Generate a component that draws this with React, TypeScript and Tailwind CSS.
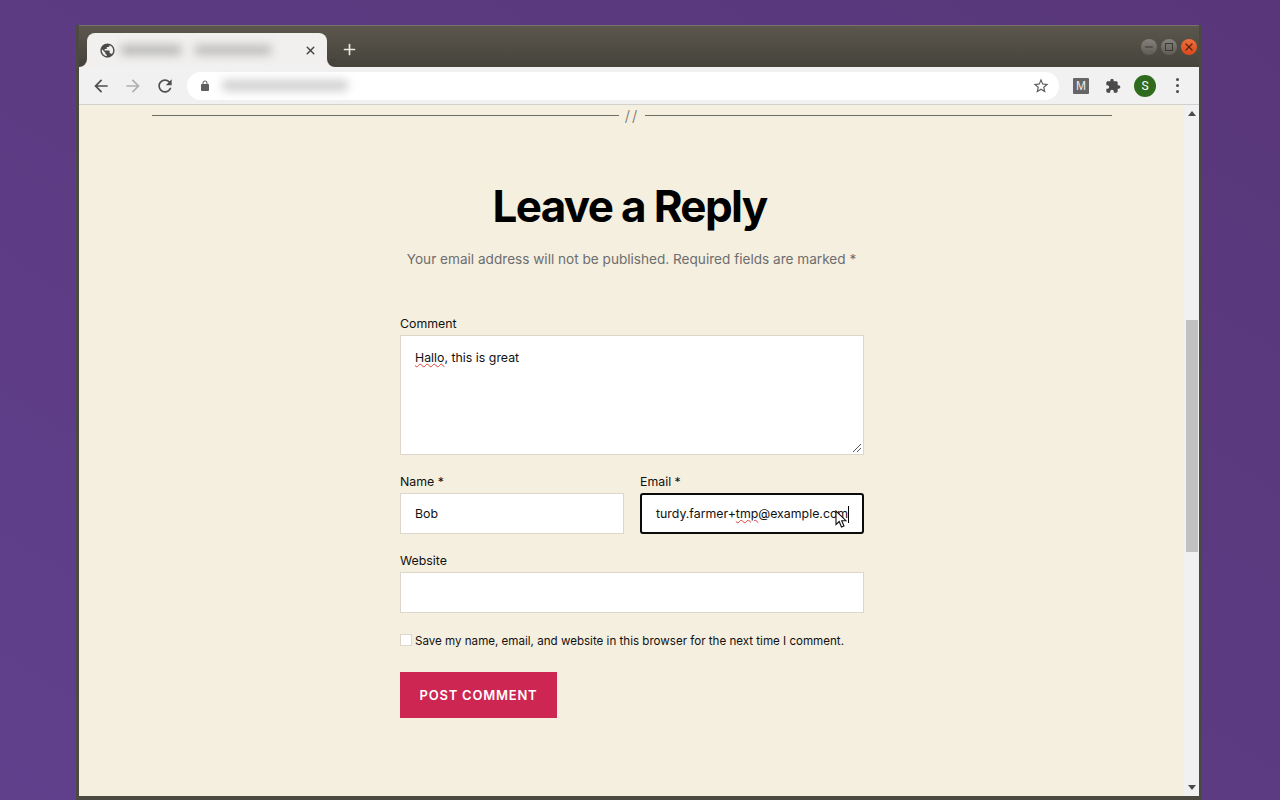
import { Minus, Plus, X } from 'lucide-react';

const inter = "font-['Inter',sans-serif]";

const Glyph = ({ d, className }: { d: string; className: string }) => (
  <svg viewBox="0 0 24 24" className={className} fill="currentColor">
    <path d={d} />
  </svg>
);

const icons = {
  globe: 'M12 2C6.48 2 2 6.48 2 12s4.48 10 10 10 10-4.48 10-10S17.52 2 12 2zm-1 17.93c-3.95-.49-7-3.85-7-7.93 0-.62.08-1.21.21-1.79L9 15v1c0 1.1.9 2 2 2v1.93zm6.9-2.54c-.26-.81-1-1.39-1.9-1.39h-1v-3c0-.55-.45-1-1-1H8v-2h2c.55 0 1-.45 1-1V7h2c1.1 0 2-.9 2-2v-.41c2.93 1.19 5 4.06 5 7.41 0 2.08-.8 3.97-2.1 5.39z',
  back: 'M20 11H7.83l5.59-5.59L12 4l-8 8 8 8 1.41-1.41L7.83 13H20v-2z',
  forward: 'M4 11h12.17l-5.59-5.59L12 4l8 8-8 8-1.41-1.41L16.17 13H4v-2z',
  reload: 'M17.65 6.35C16.2 4.9 14.21 4 12 4c-4.42 0-7.99 3.58-7.99 8s3.57 8 7.99 8c3.73 0 6.84-2.55 7.73-6h-2.08c-.82 2.33-3.04 4-5.65 4-3.31 0-6-2.69-6-6s2.69-6 6-6c1.66 0 3.14.69 4.22 1.78L13 11h7V4l-2.35 2.35z',
  lock: 'M18 8h-1V6c0-2.76-2.24-5-5-5S7 3.24 7 6v2H6c-1.1 0-2 .9-2 2v10c0 1.1.9 2 2 2h12c1.1 0 2-.9 2-2V10c0-1.1-.9-2-2-2zM9 6c0-1.66 1.34-3 3-3s3 1.34 3 3v2H9V6z',
  star: 'M22 9.24l-7.19-.62L12 2 9.19 8.63 2 9.24l5.46 4.73L5.82 21 12 17.27 18.18 21l-1.63-7.03L22 9.24zM12 15.4l-3.76 2.27 1-4.28-3.32-2.88 4.38-.38L12 6.1l1.71 4.04 4.38.38-3.32 2.88 1 4.28L12 15.4z',
  puzzle: 'M20.5 11H19V7c0-1.1-.9-2-2-2h-4V3.5C13 2.12 11.88 1 10.5 1S8 2.12 8 3.5V5H4c-1.1 0-1.99.9-1.99 2v3.8H3.5c1.49 0 2.7 1.21 2.7 2.7s-1.21 2.7-2.7 2.7H2V20c0 1.1.9 2 2 2h3.8v-1.5c0-1.49 1.21-2.7 2.7-2.7 1.49 0 2.7 1.21 2.7 2.7V22H17c1.1 0 2-.9 2-2v-4h1.5c1.38 0 2.5-1.12 2.5-2.5S21.88 11 20.5 11z',
};

const TitleBar = () => (
  <div className="relative flex h-[42px] items-end border-t border-[#77736a] bg-gradient-to-b from-[#5c574d] to-[#45433b] pl-[8px] pr-[9px]">
    <div className="relative flex h-[34px] w-[240px] items-center rounded-t-lg bg-[#f1f0ef] pl-[12px] pr-[10px]">
      <div className="absolute -left-2 bottom-0 h-2 w-2 bg-[#f1f0ef]">
        <div className="h-full w-full rounded-br-lg bg-[#45433b]" />
      </div>
      <div className="absolute -right-2 bottom-0 h-2 w-2 bg-[#f1f0ef]">
        <div className="h-full w-full rounded-bl-lg bg-[#45433b]" />
      </div>
      <Glyph d={icons.globe} className="h-[17px] w-[17px] text-[#4a4a4a]" />
      <div className="ml-[5px] flex flex-1 gap-[14px] blur-[5px]">
        <div className="h-[10px] w-[60px] bg-[#b8b7b5]" />
        <div className="h-[10px] w-[76px] bg-[#bdbcba]" />
      </div>
      <X className="h-[13px] w-[13px] text-[#45433f]" strokeWidth={2.6} />
    </div>
    <Plus className="mb-[9px] ml-[14px] h-[17px] w-[17px] text-[#ece9e2]" strokeWidth={2.4} />
    <div className="absolute right-[2px] top-[13px] flex gap-1">
      <div className="flex h-4 w-4 items-center justify-center rounded-full bg-gradient-to-b from-[#85827b] to-[#5f5c55]">
        <Minus className="h-3 w-3 text-[#3c3a35]" />
      </div>
      <div className="flex h-4 w-4 items-center justify-center rounded-full bg-gradient-to-b from-[#85827b] to-[#5f5c55]">
        <div className="h-2 w-2 border border-[#3c3a35]" />
      </div>
      <div className="flex h-4 w-4 items-center justify-center rounded-full bg-gradient-to-b from-[#f0703a] to-[#d8481c]">
        <X className="h-3 w-3 text-[#5a2410]" strokeWidth={2.4} />
      </div>
    </div>
  </div>
);

const Toolbar = () => (
  <div className="flex h-[38px] items-center border-b border-[#d3d1cd] bg-[#f1f1f1] pl-[12px]">
    <Glyph d={icons.back} className="h-[20px] w-[20px] text-[#4f4f4f]" />
    <Glyph d={icons.forward} className="ml-[12px] h-[20px] w-[20px] text-[#b0b0b0]" />
    <Glyph d={icons.reload} className="ml-[12px] h-[20px] w-[20px] text-[#4f4f4f]" />
    <div className="ml-[12px] flex h-[28px] w-[872px] items-center rounded-full bg-white pl-[12px] pr-[9px]">
      <Glyph d={icons.lock} className="h-[12px] w-[12px] text-[#5f5f5f]" />
      <div className="ml-[11px] flex-1">
        <div className="h-[11px] w-[126px] rounded bg-[#cfcfcf] blur-[5px]" />
      </div>
      <Glyph d={icons.star} className="h-[18px] w-[18px] text-[#5f5f5f]" />
    </div>
    <div className="ml-[14px] flex h-4 w-4 items-center justify-center rounded-[1px] bg-[#666] font-['Liberation_Sans',sans-serif] text-[12px] text-[#eee]">M</div>
    <Glyph d={icons.puzzle} className="ml-[16px] h-[16px] w-[16px] text-[#4a4a4a]" />
    <div className="ml-[13px] flex h-[22px] w-[22px] items-center justify-center rounded-full bg-[#2f6b1c] font-['Roboto',sans-serif] text-[12px] text-white">S</div>
    <div className="ml-[20px] flex flex-col gap-[3px]">
      <div className="h-[3px] w-[3px] rounded-full bg-[#4a4a4a]" />
      <div className="h-[3px] w-[3px] rounded-full bg-[#4a4a4a]" />
      <div className="h-[3px] w-[3px] rounded-full bg-[#4a4a4a]" />
    </div>
  </div>
);

const Scrollbar = () => (
  <div className="flex w-[15px] flex-col items-center bg-[#f1f1f1]">
    <div className="mt-[6px] h-0 w-0 border-x-[4px] border-b-[5px] border-x-transparent border-b-[#4a4a4a]" />
    <div className="mt-[204px] h-[232px] w-[12px] bg-[#c1c1c1]" />
    <div className="mt-auto mb-[6px] h-0 w-0 border-x-[4px] border-t-[5px] border-x-transparent border-t-[#4a4a4a]" />
  </div>
);

const Squiggle = ({ children }: { children: string }) => (
  <span className="underline decoration-[#e0403a] decoration-wavy decoration-[1px] underline-offset-1">{children}</span>
);

const Form = () => (
  <div className={`flex-1 overflow-hidden bg-[#f5efe0] ${inter}`}>
    <div className="flex items-center pl-[73px] pt-[2px]">
      <div className="h-px w-[467px] bg-[#6d6d68]" />
      <div className="flex h-[16px] w-[26px] items-center justify-center text-[15px] font-light leading-none tracking-[2px] text-[#6d6d68]">//</div>
      <div className="h-px w-[467px] bg-[#6d6d68]" />
    </div>
    <h1 className="mr-[4px] mt-[55px] text-center text-[44px] font-[750] leading-[56px] tracking-[-0.038em] text-black">Leave a Reply</h1>
    <p className="mt-[13px] text-center text-[13.6px] leading-[24px] text-[#6d6d6d]">
      Your email address will not be published. Required fields are marked *
    </p>
    <div className="ml-[321px] mt-[42px] w-[464px] text-[12.35px] text-[#111]">
      <label className="block leading-[22px]">Comment</label>
      <div className="relative h-[120px] border border-[#dcd7ca] bg-white px-[14px] pt-[12px] leading-[20px]">
        <Squiggle>Hallo</Squiggle>, this is great
        <svg viewBox="0 0 10 10" className="absolute bottom-[1px] right-[1px] h-[10px] w-[10px] text-[#555]" fill="none" stroke="currentColor">
          <path d="M1 9 9 1M5 9 9 5" />
        </svg>
      </div>
      <div className="mt-[16px] flex gap-4">
        <div className="w-[224px]">
          <label className="block leading-[22px]">Name *</label>
          <div className="flex h-[41px] items-center border border-[#dcd7ca] bg-white px-[14px] pt-[2px]">Bob</div>
        </div>
        <div className="w-[224px]">
          <label className="block leading-[22px]">Email *</label>
          <div className="relative flex h-[41px] items-center rounded-[3px] border-2 border-[#0b0b0b] bg-white pl-[14px] pt-[2px]">
            <span className="whitespace-nowrap">turdy.farmer+<Squiggle>tmp</Squiggle>@example.com</span>
            <div className="h-[17px] w-px bg-black" />
            <svg viewBox="0 0 12 18" className="absolute left-[193px] top-[15px] h-[18px] w-[12px]">
              <path d="M1 1v13.5l3.2-3 2.3 5.5 2.5-1-2.3-5.3H11z" fill="#fff" stroke="#111" strokeWidth="1.1" />
            </svg>
          </div>
        </div>
      </div>
      <label className="mt-[16px] block leading-[22px]">Website</label>
      <div className="h-[41px] border border-[#dcd7ca] bg-white" />
      <div className="mt-[18px] flex items-center gap-[3px] text-[11.58px] leading-[20px]">
        <div className="-mt-[2px] h-3 w-3 border border-[#dcd7ca] bg-white" />
        <span>Save my name, email, and website in this browser for the next time I comment.</span>
      </div>
      <button className="mt-[21px] flex h-[46px] w-[157px] items-center justify-center bg-[#cd2653] pt-[2px] text-[13px] font-semibold tracking-[0.06em] text-white">
        POST COMMENT
      </button>
    </div>
  </div>
);

export default function App() {
  return (
    <div className="h-[800px] w-[1280px] overflow-hidden bg-gradient-to-tr from-[#60408c] to-[#593679] pl-[76px] pt-[25px]">
      <div className="flex h-[775px] w-[1126px] flex-col border-x-[3px] border-b-[4px] border-[#4b4940]">
        <TitleBar />
        <Toolbar />
        <div className="flex min-h-0 flex-1">
          <Form />
          <Scrollbar />
        </div>
      </div>
    </div>
  );
}
